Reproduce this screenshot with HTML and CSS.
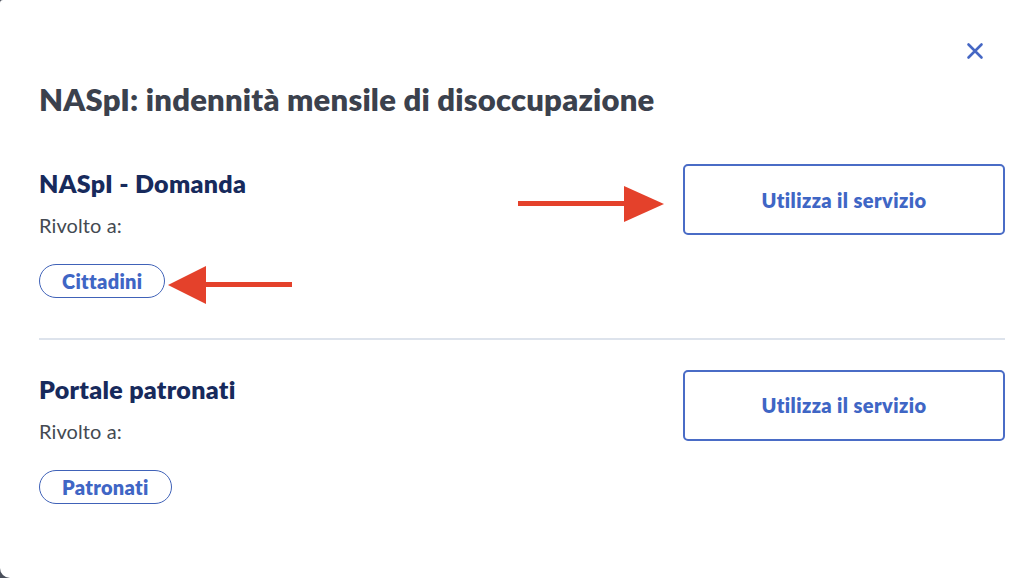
FILE: index.html
```html
<!DOCTYPE html>
<html lang="it">
<head>
<meta charset="utf-8">
<title>NASpI</title>
<link rel="stylesheet" href="styles.css">
</head>
<body>
<div class="modal">
  <button class="close" aria-label="Chiudi">
    <svg width="18" height="18" viewBox="0 0 18 18"><path d="M2.5 2.5L15.5 15.5M15.5 2.5L2.5 15.5" stroke="#4667c4" stroke-width="2.6" stroke-linecap="round"/></svg>
  </button>
  <h1 class="title">NASpI: indennità mensile di disoccupazione</h1>

  <section class="service">
    <div class="info">
      <h2 class="name">NASpI - Domanda</h2>
      <p class="label">Rivolto a:</p>
      <span class="pill">Cittadini</span>
    </div>
    <a class="btn" href="#">Utilizza il servizio</a>
    <svg class="arrow arrow-right" width="146" height="36" viewBox="0 0 146 36"><rect x="0" y="15" width="112" height="5" fill="#e4412b"/><polygon points="106,0 146,18 106,36" fill="#e4412b"/></svg>
    <svg class="arrow arrow-left" width="124" height="38" viewBox="0 0 124 38"><rect x="34" y="16" width="90" height="5" fill="#e4412b"/><polygon points="0,19 38,0 38,38" fill="#e4412b"/></svg>
  </section>

  <hr class="divider">

  <section class="service">
    <div class="info">
      <h2 class="name">Portale patronati</h2>
      <p class="label">Rivolto a:</p>
      <span class="pill">Patronati</span>
    </div>
    <a class="btn" href="#">Utilizza il servizio</a>
  </section>
</div>
</body>
</html>
```

FILE: styles.css
```css
* { box-sizing: border-box; }
html, body { margin: 0; padding: 0; }
body {
  background: #4a4f5b;
  width: 1024px;
  height: 578px;
  overflow: hidden;
  font-family: "Lato", "Open Sans", sans-serif;
}
.modal {
  position: relative;
  width: 1024px;
  height: 578px;
  background: #fff;
  border-radius: 3px 0 0 10px;
  padding: 79px 19px 0 39px;
}
.close {
  position: absolute;
  top: 42px;
  left: 966px;
  width: 18px;
  height: 18px;
  padding: 0;
  border: 0;
  background: none;
  display: flex;
}
.title {
  margin: 0 0 49px;
  font-size: 31px;
  font-weight: 800;
  letter-spacing: 0.2px;
  color: #3b414d;
  line-height: 40px;
}
.service {
  position: relative;
  display: flex;
  justify-content: space-between;
  align-items: flex-start;
}
.name {
  margin: 0;
  font-size: 25px;
  font-weight: 800;
  letter-spacing: 0.3px;
  color: #172a5c;
  line-height: 30px;
}
.label {
  margin: 15px 0 27px;
  font-size: 20px;
  letter-spacing: 0.1px;
  color: #444a52;
  line-height: 24px;
}
.pill {
  display: inline-flex;
  align-items: center;
  justify-content: center;
  height: 34px;
  padding: 0 22px;
  border: 1.5px solid #4062b8;
  border-radius: 17px;
  font-size: 20px;
  font-weight: 800;
  letter-spacing: 0.3px;
  color: #3f66c5;
}
.btn {
  margin-top: -4px;
  display: flex;
  align-items: center;
  justify-content: center;
  width: 322px;
  height: 71px;
  border: 2px solid #4a6cc6;
  border-radius: 5px;
  font-size: 20px;
  font-weight: 800;
  letter-spacing: 0.4px;
  color: #3f66c5;
  text-decoration: none;
}
.arrow { position: absolute; }
.arrow-right { left: 479px; top: 18px; }
.arrow-left { left: 129px; top: 98px; }
.divider {
  margin: 40px 0 34px;
  border: 0;
  height: 1.5px;
  background: #dde3ec;
}
```
